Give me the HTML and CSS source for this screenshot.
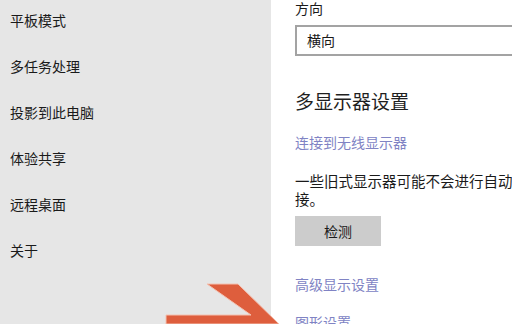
FILE: index.html
```html
<!DOCTYPE html>
<html lang="zh-CN">
<head>
<meta charset="utf-8">
<link rel="stylesheet" href="styles.css">
</head>
<body>
<div class="page">
  <nav class="sidebar">
    <div class="nav-item">平板模式</div>
    <div class="nav-item">多任务处理</div>
    <div class="nav-item">投影到此电脑</div>
    <div class="nav-item">体验共享</div>
    <div class="nav-item">远程桌面</div>
    <div class="nav-item">关于</div>
  </nav>
  <main class="main">
    <div class="label">方向</div>
    <div class="select">横向</div>
    <h2 class="heading">多显示器设置</h2>
    <a class="link link-wireless">连接到无线显示器</a>
    <p class="para">一些旧式显示器可能不会进行自动连<br>接。</p>
    <div class="button">检测</div>
    <a class="link link-advanced">高级显示设置</a>
    <a class="link link-graphics">图形设置</a>
  </main>
  <svg class="arrow" width="512" height="324" viewBox="0 0 512 324">
    <polygon points="166,315 251,315 207,284 238,284 279,324 166,324" fill="#de5e3d" stroke="#f4c2b2" stroke-width="1"/>
  </svg>
</div>
</body>
</html>
```

FILE: styles.css
```css
* { box-sizing: border-box; }
html, body {
  margin: 0;
  padding: 0;
  width: 512px;
  height: 324px;
  overflow: hidden;
  font-family: "Noto Sans CJK SC", "Noto Sans", sans-serif;
  color: #1a1a1a;
}
.page {
  position: relative;
  display: flex;
  width: 512px;
  height: 324px;
  overflow: hidden;
}
.sidebar {
  flex: 0 0 271px;
  background: #e6e6e6;
  padding: 10px 0 0 10px;
  display: flex;
  flex-direction: column;
  gap: 26px;
}
.nav-item {
  font-size: 14px;
  line-height: 20px;
  color: #1a1a1a;
}
.main {
  flex: 1 1 auto;
  background: #ffffff;
  padding-left: 24px;
  display: flex;
  flex-direction: column;
  align-items: flex-start;
  white-space: nowrap;
}
.label {
  font-size: 14px;
  line-height: 18px;
  margin-top: -1px;
}
.select {
  margin-top: 8px;
  width: 260px;
  height: 31px;
  border: 2px solid #a3a3a3;
  border-right: none;
  padding-left: 10px;
  font-size: 14px;
  line-height: 27px;
}
.heading {
  margin: 32px 0 0 0;
  font-weight: normal;
  font-size: 19px;
  line-height: 26px;
  color: #1f1f1f;
}
.link {
  font-size: 14px;
  line-height: 20px;
  color: #8083c4;
  text-decoration: none;
}
.link-wireless { margin-top: 18px; }
.para {
  margin: 20px 0 0 0;
  font-size: 14.5px;
  line-height: 18px;
}
.button {
  margin-top: 8px;
  width: 86px;
  height: 30px;
  background: #cccccc;
  font-size: 14px;
  line-height: 30px;
  text-align: center;
}
.link-advanced { margin-top: 28px; }
.link-graphics { margin-top: 18px; }
.arrow {
  position: absolute;
  left: 0;
  top: 0;
  pointer-events: none;
}
```
